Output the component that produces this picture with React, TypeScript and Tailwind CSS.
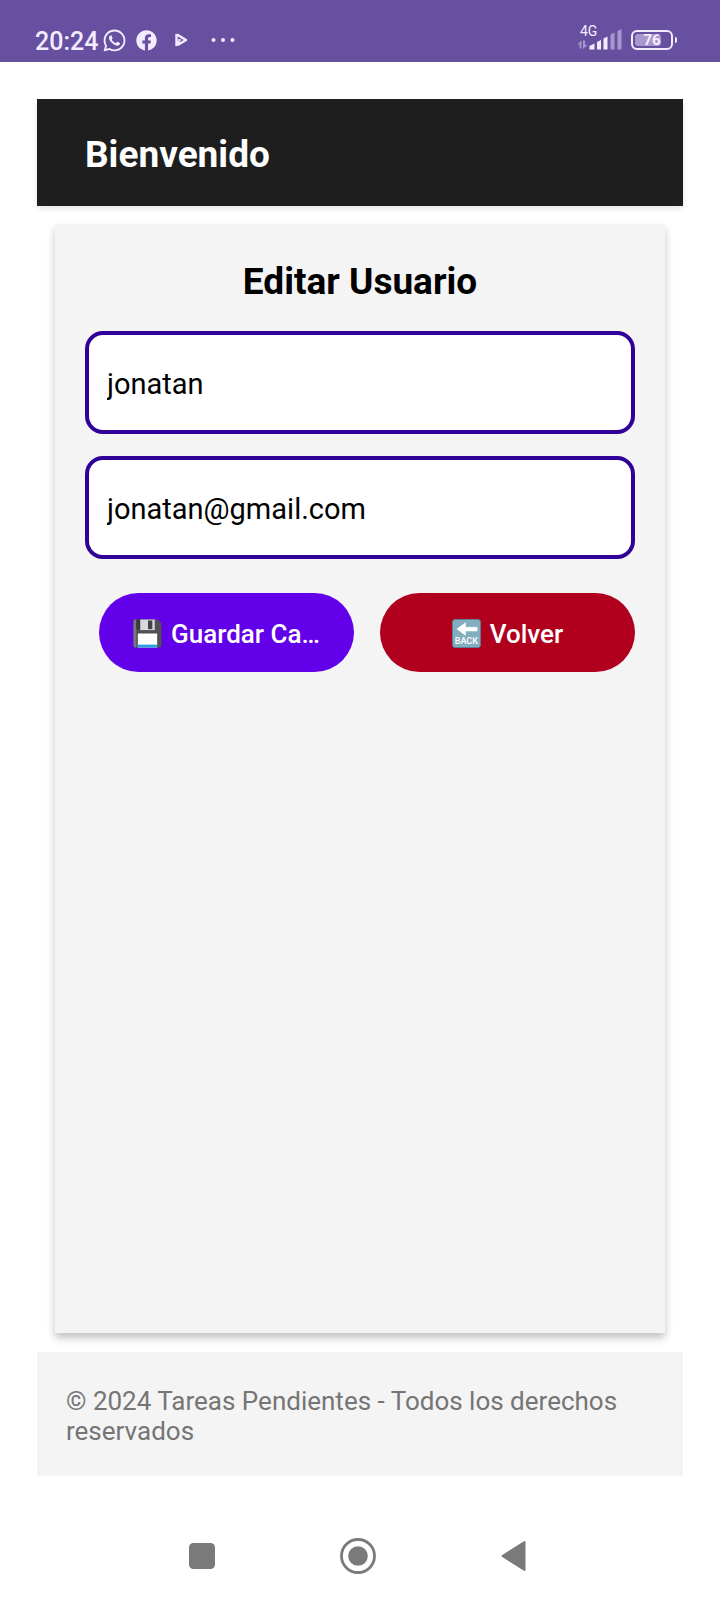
import { useState } from "react";
import { FaFacebook, FaWhatsapp } from "react-icons/fa";

function NetworkIcon() {
  return (
    <svg width="46" height="26" viewBox="0 0 46 26" aria-hidden="true">
      <g fill="#a797cc">
        <path d="M2.600 21.500V17.500H0.300L4.500 13.500V21.500Z" />
        <path d="M6 13.500H8V18H10.300L6 22Z" />
      </g>
      <g fill="#f3ecff">
        <path d="M12.500 22.500v-3.500l5-2.500v6z" />
        <path d="M20 22.500v-7.500l4-2v9.500z" />
        <path d="M26.500 22.500v-11l4-2v13z" />
      </g>
      <g fill="#a797cc">
        <path d="M33.500 22.500v-15l4-2v17z" />
        <path d="M40.500 22.500v-18.500l4-2v20.500z" />
      </g>
    </svg>
  );
}

function StatusBar() {
  return (
    <header className="flex h-[62px] items-center justify-between bg-[#6750a0] pr-[43px] pl-[35px] pt-[18px] text-[#f3ecff]">
      <div className="flex items-center">
        <span className="pt-[3px] text-[25px] leading-7 font-medium">20:24</span>
        <FaWhatsapp className="ml-1 size-[25px]" aria-hidden="true" />
        <FaFacebook className="ml-[9px] size-[21px]" aria-hidden="true" />
        <svg className="ml-[17px]" width="14" height="16" viewBox="0 0 14 16" aria-hidden="true">
          <path d="M3 2.500L12 8L4.500 12.500V9" fill="none" stroke="#f3ecff" strokeWidth="2.600" strokeLinejoin="round" />
          <path d="M2.500 2v12" stroke="#f3ecff" strokeWidth="2.400" />
          <path d="M4 8h3" stroke="#f3ecff" strokeWidth="1.600" />
        </svg>
        <svg className="ml-[23px]" width="24" height="6" viewBox="0 0 24 6" fill="#f3ecff" aria-hidden="true">
          <circle cx="2.500" cy="3" r="2" />
          <circle cx="12" cy="3" r="2" />
          <circle cx="21.500" cy="3" r="2" />
        </svg>
      </div>
      <div className="flex items-center gap-2">
        <div className="relative">
          <NetworkIcon />
          <span className="absolute -top-0.5 left-[3px] text-[14px] leading-3">4G</span>
        </div>
        <div className="flex items-center gap-0.5">
          <div className="relative flex h-5 w-[42px] items-center justify-center rounded-md border-2 border-[#f3ecff]">
            <div className="absolute top-0.5 left-0.5 h-3 w-[26px] rounded-[3px] bg-[#a797cc]" />
            <span className="relative text-[15px] leading-4 font-bold">76</span>
          </div>
          <div className="h-1.5 w-0.5 rounded-r bg-[#f3ecff]" />
        </div>
      </div>
    </header>
  );
}

function FloppyIcon() {
  return (
    <svg className="shrink-0" width="29" height="29" viewBox="0 0 30 30" aria-hidden="true">
      <path d="M2 0.500H25.500L29.500 4.500V27.500Q29.500 29.500 27.500 29.500H2.500Q0.500 29.500 0.500 27.500V2Q0.500 0.500 2 0.500Z" fill="#4f4f54" />
      <path d="M0.500 3V27.500Q0.500 29.500 2.500 29.500H3.500V0.500H2Q0.500 0.500 0.500 3Z" fill="#77777c" />
      <path d="M3.500 0.500H7.500V11H3.500Z" fill="#3a3a3e" />
      <path d="M7.500 0.500H22.500V11.500H7.500Z" fill="#d5d8dc" />
      <path d="M15.500 1.500H20V10.500H15.500Z" fill="#424247" />
      <path d="M5 15H25V29.500H5Z" fill="#ffffff" />
      <path d="M5 26.500H25V29.500H5Z" fill="#2a9be6" />
    </svg>
  );
}

function BackIcon() {
  return (
    <span className="relative flex size-[29px] shrink-0 justify-center rounded-[3px] border border-[#5b7f93] bg-[#82aec0]">
      <svg width="27" height="18" viewBox="0 0 28 18" aria-hidden="true">
        <path d="M4 9L13 2.500V7.200H25V11H13V15.500Z" fill="#fff" stroke="#fff" strokeWidth="0.600" strokeLinejoin="round" />
      </svg>
      <span className="absolute bottom-0.5 text-[9px] leading-2 font-medium text-white">BACK</span>
    </span>
  );
}

function NavigationBar() {
  const button = "flex size-12 items-center justify-center text-[#7a7a7a]";
  return (
    <nav className="grid h-[88px] grid-cols-[1fr_48px_108px_48px_108px_48px_1fr] items-center pr-[5px]">
      <button type="button" aria-label="Recientes" className={button + " col-start-2"}>
        <svg width="26" height="26" viewBox="0 0 26 26">
          <rect width="26" height="26" rx="4.500" fill="currentColor" />
        </svg>
      </button>
      <button type="button" aria-label="Inicio" className={button + " col-start-4"}>
        <svg width="36" height="36" viewBox="0 0 36 36">
          <circle cx="18" cy="18" r="16.500" fill="none" stroke="currentColor" strokeWidth="2.800" />
          <circle cx="18" cy="18" r="9.800" fill="currentColor" />
        </svg>
      </button>
      <button type="button" aria-label="Atrás" className={button + " col-start-6"}>
        <svg width="26" height="32" viewBox="0 0 26 32">
          <path d="M1.500 16L23.500 2V30Z" fill="currentColor" stroke="currentColor" strokeWidth="2" strokeLinejoin="round" />
        </svg>
      </button>
    </nav>
  );
}

export default function App() {
  const [name, setName] = useState("jonatan");
  const [email, setEmail] = useState("jonatan@gmail.com");
  const field =
    "h-[103px] w-full rounded-[18px] border-4 border-[#310099] bg-white px-[18px] pt-0.5 text-[29px] text-black outline-none";
  const action =
    "flex h-[79px] min-w-0 flex-1 items-center justify-center gap-[9px] rounded-full pt-0.5 text-[26px] font-medium text-white";

  return (
    <div className="flex min-h-screen flex-col bg-white font-[Roboto,sans-serif]">
      <StatusBar />
      <main className="flex flex-1 flex-col px-[37px] pt-[37px] pb-9">
        <div className="flex h-[107px] items-center bg-[#1e1e1e] pt-1 pl-12 shadow-[0_3px_6px_rgba(0,0,0,0.1)]">
          <h1 className="text-[37px] leading-[42px] font-bold text-white">Bienvenido</h1>
        </div>
        <form
          onSubmit={(event) => event.preventDefault()}
          className="mx-[18px] mt-[18px] flex flex-1 flex-col bg-[#f4f4f4] px-[30px] pt-[37px] shadow-[0_5px_8px_rgba(0,0,0,0.24)]"
        >
          <h2 className="text-center text-[37px] leading-[42px] font-bold text-black">Editar Usuario</h2>
          <div className="mt-7 flex flex-col gap-[22px]">
            <input type="text" aria-label="Nombre" value={name} onChange={(event) => setName(event.target.value)} className={field} />
            <input type="email" aria-label="Correo" value={email} onChange={(event) => setEmail(event.target.value)} className={field} />
          </div>
          <div className="mt-[34px] flex gap-[26px] pl-3.5">
            <button type="submit" className={action + " bg-[#6200ea]"}>
              <FloppyIcon />
              <span className="pt-0.5 whitespace-nowrap">Guardar Ca…</span>
            </button>
            <button type="button" className={action + " bg-[#b0001e]"}>
              <BackIcon />
              <span className="pt-0.5">Volver</span>
            </button>
          </div>
        </form>
        <footer className="mt-[19px] bg-[#f4f4f4] px-[29px] pt-[34px] pb-[30px]">
          <p className="text-[26px] leading-[30px] text-[#757575]">
            © 2024 Tareas Pendientes - Todos los derechos reservados
          </p>
        </footer>
      </main>
      <NavigationBar />
    </div>
  );
}
